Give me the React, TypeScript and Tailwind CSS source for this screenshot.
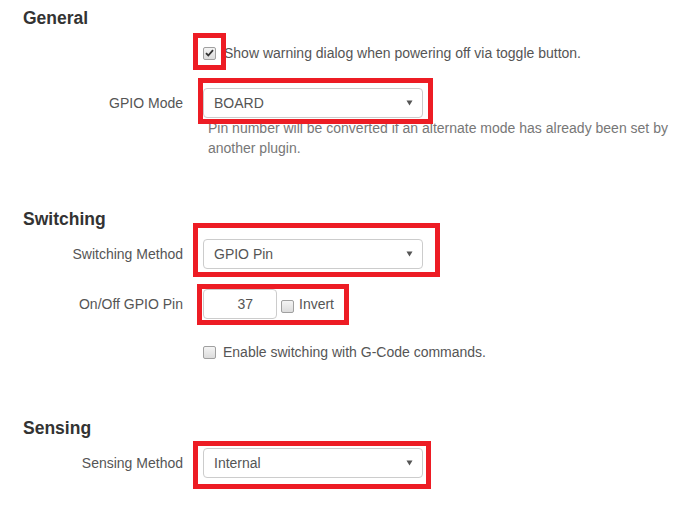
import React from 'react';

const font = { fontFamily: '"Liberation Sans", Arial, sans-serif' };

const Mark: React.FC<{ className: string }> = ({ className }) => (
  <div className={`pointer-events-none absolute border-[5px] border-[#ed1c24] ${className}`} />
);

const Box: React.FC<{ checked?: boolean }> = ({ checked }) => (
  <span className="inline-flex h-[13px] w-[13px] shrink-0 items-center justify-center rounded-[2px] border border-[#a0a0a0] bg-gradient-to-b from-[#f4f4f4] to-[#dcdcdc]">
    {checked && (
      <svg width="9" height="8" viewBox="0 0 9 8">
        <path d="M1 4.2 L3.3 6.5 L8 1.2" fill="none" stroke="#333" strokeWidth="1.8" />
      </svg>
    )}
  </span>
);

const Select: React.FC<{ value: string }> = ({ value }) => (
  <div className="flex h-[30px] w-[220px] items-center justify-between rounded-[4px] border border-[#cccccc] bg-white pl-[10px] pr-[9px] text-[14px] text-[#555]">
    <span>{value}</span>
    <svg width="7" height="6" viewBox="0 0 7 6">
      <path d="M0.5 0.5 H6.5 L3.5 5.5 Z" fill="#555" />
    </svg>
  </div>
);

const Row: React.FC<{ label: string; className?: string; children: React.ReactNode }> = ({ label, className, children }) => (
  <div className={`flex items-center ${className ?? ''}`}>
    <div className="w-[160px] text-right text-[14px] text-[#555]">{label}</div>
    <div className="ml-[20px]">{children}</div>
  </div>
);

const Heading: React.FC<{ children: React.ReactNode; className?: string }> = ({ children, className }) => (
  <h4 className={`h-[20px] text-[17.5px] font-bold leading-[20px] text-[#333] ${className ?? ''}`}>{children}</h4>
);

const App: React.FC = () => {
  return (
    <div className="min-h-[516px] w-[693px] bg-white pl-[23px]" style={font}>
      <div className="h-[8px]" />
      <Heading>General</Heading>

      <div className="ml-[180px] mt-[15px] flex h-[20px] items-center text-[14px] text-[#555]">
        <div className="relative flex">
          <Box checked />
          <Mark className="-left-[10px] -right-[10px] -top-[14px] -bottom-[10px] border-[4px]" />
        </div>
        <span className="ml-[8px]">Show warning dialog when powering off via toggle button.</span>
      </div>

      <Row label="GPIO Mode" className="mt-[25px]">
        <div className="relative">
          <Select value="BOARD" />
          <Mark className="-left-[5px] -right-[10px] -top-[10px] -bottom-[6px]" />
        </div>
      </Row>
      <div className="ml-[185px] w-[470px] text-[14px] leading-[20px] text-[#777]">
        Pin number will be converted if an alternate mode has already been set by another plugin.
      </div>

      <Heading className="mt-[51px]">Switching</Heading>
      <Row label="Switching Method" className="mt-[10px]">
        <div className="relative">
          <Select value="GPIO Pin" />
          <Mark className="-left-[10px] -right-[17px] -top-[16px] -bottom-[8px]" />
        </div>
      </Row>
      <Row label="On/Off GPIO Pin" className="mt-[20px]">
        <div className="relative flex items-center">
          <div className="flex h-[30px] w-[74px] items-center justify-end rounded-[4px] border border-[#cccccc] bg-white pr-[23px] text-[14px] text-[#555]">
            37
          </div>
          <div className="ml-[4px] mt-[5px] flex">
            <Box />
          </div>
          <span className="ml-[5px] text-[14px] text-[#555]">Invert</span>
          <Mark className="-left-[6px] -right-[15px] -top-[5px] -bottom-[6px]" />
        </div>
      </Row>
      <div className="ml-[180px] mt-[23px] flex h-[20px] items-center text-[14px] text-[#555]">
        <Box />
        <span className="ml-[7px]">Enable switching with G-Code commands.</span>
      </div>

      <Heading className="mt-[56px]">Sensing</Heading>
      <Row label="Sensing Method" className="mt-[10px]">
        <div className="relative">
          <Select value="Internal" />
          <Mark className="-left-[10px] -right-[8px] -top-[7px] -bottom-[11px]" />
        </div>
      </Row>
    </div>
  );
};

export default App;
